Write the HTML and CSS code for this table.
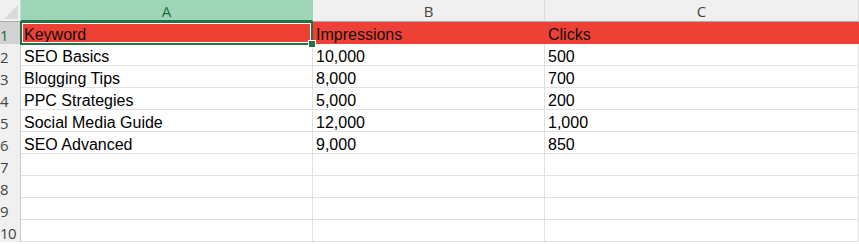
FILE: index.html
```html
<!DOCTYPE html>
<html>
<head>
<meta charset="utf-8">
<link rel="stylesheet" href="styles.css">
</head>
<body>
<div class="sheet">
  <div class="corner"><span class="tri"></span></div>
  <div class="colhead sel">A</div>
  <div class="colhead">B</div>
  <div class="colhead">C</div>

  <div class="rowhead sel">1</div>
  <div class="cell hdr a1">Keyword<span class="selbox"></span><span class="handle"></span></div>
  <div class="cell hdr">Impressions</div>
  <div class="cell hdr">Clicks</div>

  <div class="rowhead">2</div>
  <div class="cell">SEO Basics</div>
  <div class="cell">10,000</div>
  <div class="cell">500</div>

  <div class="rowhead">3</div>
  <div class="cell">Blogging Tips</div>
  <div class="cell">8,000</div>
  <div class="cell">700</div>

  <div class="rowhead">4</div>
  <div class="cell">PPC Strategies</div>
  <div class="cell">5,000</div>
  <div class="cell">200</div>

  <div class="rowhead">5</div>
  <div class="cell">Social Media Guide</div>
  <div class="cell">12,000</div>
  <div class="cell">1,000</div>

  <div class="rowhead">6</div>
  <div class="cell">SEO Advanced</div>
  <div class="cell">9,000</div>
  <div class="cell">850</div>

  <div class="rowhead">7</div>
  <div class="cell"></div><div class="cell"></div><div class="cell"></div>
  <div class="rowhead">8</div>
  <div class="cell"></div><div class="cell"></div><div class="cell"></div>
  <div class="rowhead">9</div>
  <div class="cell"></div><div class="cell"></div><div class="cell"></div>
  <div class="rowhead">10</div>
  <div class="cell"></div><div class="cell"></div><div class="cell"></div>
</div>
</body>
</html>
```

FILE: styles.css
```css
html, body {
  margin: 0;
  padding: 0;
  background: #ffffff;
}
.sheet {
  display: grid;
  grid-template-columns: 21px 292px 232px 1fr;
  grid-template-rows: 22px repeat(10, 22px);
  width: 859px;
  font-family: "Liberation Sans", Arial, sans-serif;
  font-size: 16px;
  color: #000;
}
.sheet > div {
  box-sizing: border-box;
}
.corner {
  background: #f0f0f0;
  border-right: 1px solid #d4d4d4;
  border-bottom: 1px solid #ababab;
  position: relative;
}
.tri {
  position: absolute;
  right: 2px;
  bottom: 2px;
  width: 0;
  height: 0;
  border-left: 14px solid transparent;
  border-bottom: 14px solid #dadada;
}
.colhead {
  background: #f0f0f0;
  border-right: 1px solid #dadada;
  border-bottom: 1px solid #ababab;
  display: flex;
  align-items: center;
  justify-content: center;
  font-family: "Open Sans", "Liberation Sans", sans-serif;
  font-size: 15px;
  color: #444;
  padding-top: 1px;
}
.colhead.sel {
  background: #9fd5b7;
  color: #1f6a43;
  border-bottom: 2px solid #217346;
  border-right: 1px solid #9fd5b7;
}
.rowhead {
  background: #f0f0f0;
  border-right: 1px solid #c8c8c8;
  display: flex;
  align-items: center;
  font-family: "Open Sans", "Liberation Sans", sans-serif;
  font-size: 15px;
  color: #444;
  padding-top: 4px;
  letter-spacing: -0.5px;
}
.rowhead.sel {
  background: #d2d2d2;
  color: #1f6a43;
}
.cell {
  border-right: 1px solid #e1e1e1;
  border-bottom: 1px solid #e1e1e1;
  display: flex;
  align-items: center;
  padding-left: 3px;
  white-space: nowrap;
  padding-top: 4px;
}
.cell.hdr {
  background: #ee4136;
  border-right-color: #ee4136;
  border-bottom-color: #ee4136;
  color: #111;
}
.a1 {
  position: relative;
}
.selbox {
  position: absolute;
  left: -1px;
  top: -1px;
  right: -1px;
  bottom: -2px;
  border: 2px solid #217346;
  box-shadow: inset 0 0 0 1px #ffffff;
  pointer-events: none;
}
.handle {
  position: absolute;
  right: -4px;
  bottom: -5px;
  width: 6px;
  height: 6px;
  background: #217346;
  border: 1px solid #fff;
}
```
